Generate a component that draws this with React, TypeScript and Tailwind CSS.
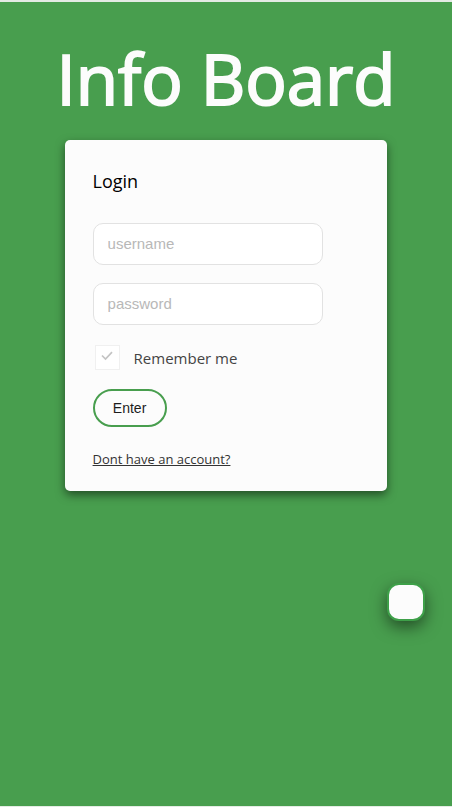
import { useState } from "react";

export default function App() {
  const [remember, setRemember] = useState(true);

  return (
    <div className="flex min-h-screen flex-col border-t-2 border-b border-[#e4ebe4] bg-[#489e4e] font-['Open_Sans',sans-serif] text-[#1c1c1c]">
      <main className="flex flex-col items-center pt-7">
        <h1 className="text-[69px] leading-[96px] font-normal whitespace-nowrap text-[#fcfcfc] [-webkit-text-stroke:2px_#fcfcfc]">Info Board</h1>
        <form
          className="mt-3.5 flex w-5/7 max-w-sm flex-col items-start rounded-[5px] bg-[#fcfcfc] px-7 pt-[27px] pb-[22px] shadow-[0_4px_10px_rgba(0,0,0,0.5)]"
          onSubmit={(event) => event.preventDefault()}
        >
          <h2 className="text-lg leading-7 font-medium text-black">Login</h2>
          <input
            type="text"
            aria-label="username"
            placeholder="username"
            className="mt-7 h-[42px] w-[230px] max-w-full rounded-[10px] border border-[#e2e2e2] bg-white px-3.5 pb-0.5 font-['Liberation_Sans',sans-serif] text-[15px] placeholder:text-[#b8b8b8]"
          />
          <input
            type="password"
            aria-label="password"
            placeholder="password"
            className="mt-[18px] h-[42px] w-[230px] max-w-full rounded-[10px] border border-[#e2e2e2] bg-white px-3.5 pb-0.5 font-['Liberation_Sans',sans-serif] text-[15px] placeholder:text-[#b8b8b8]"
          />
          <label className="mt-5 ml-0.5 flex items-center gap-3.5 text-[15px] leading-6 text-[#444]">
            <span className="grid size-[25px] place-items-center border border-[#f0f0f0] bg-white">
              <input
                type="checkbox"
                checked={remember}
                onChange={(event) => setRemember(event.target.checked)}
                className="peer col-start-1 row-start-1 size-full appearance-none"
              />
              <svg
                viewBox="0 0 12 10"
                className="pointer-events-none invisible col-start-1 row-start-1 mb-1 h-2.5 w-3 peer-checked:visible"
                fill="none"
                stroke="#c4c4c4"
                strokeWidth="1.7"
              >
                <path d="M1 4.5 4.5 8 11 1.2" />
              </svg>
            </span>
            Remember me
          </label>
          <button
            type="submit"
            className="mt-[19px] h-[38px] w-[74px] rounded-full border-2 border-[#489e4e] bg-[#fcfcfc] font-['Liberation_Sans',sans-serif] text-sm"
          >
            Enter
          </button>
          <a href="#register" className="mt-[22px] text-[13px] leading-5 text-[#333] underline">
            Dont have an account?
          </a>
        </form>
        <button
          type="button"
          aria-label="Menu"
          className="mt-[92px] mr-[27px] size-[38px] self-end rounded-xl border-2 border-[#3ea049] bg-[#fcfcfc] shadow-[0_6px_16px_rgba(0,0,0,0.5)]"
        />
      </main>
    </div>
  );
}
